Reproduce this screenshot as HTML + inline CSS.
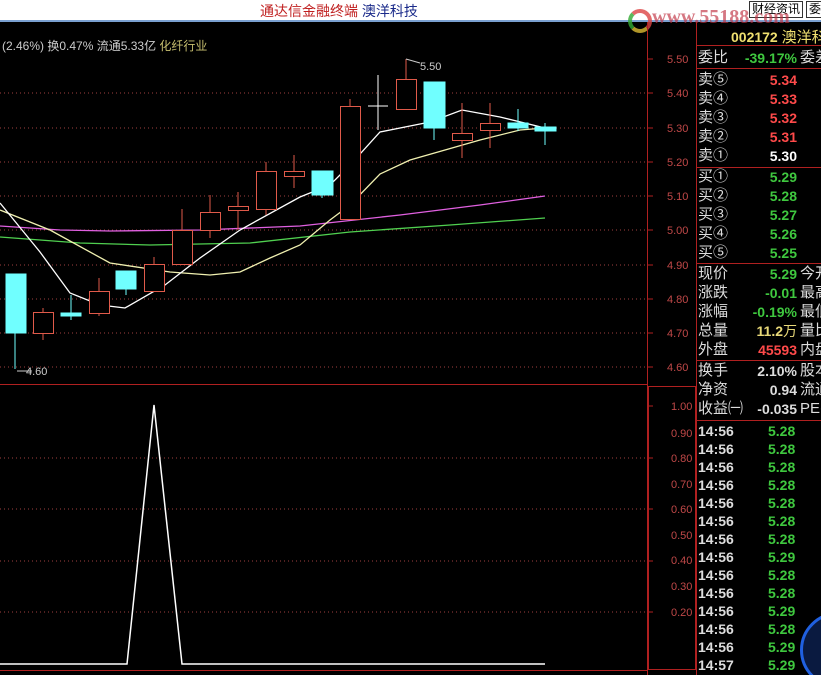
<!DOCTYPE html>
<html style="overflow:hidden;height:675px"><head><meta charset="utf-8"><style>
*{margin:0;padding:0}
body{width:821px;height:675px;overflow:hidden;background:#000;position:relative;font-family:"Liberation Sans","Noto Sans CJK SC",sans-serif}
.top{position:absolute;left:0;top:0;width:821px;height:20px;background:#fff;border-bottom:2px solid #7aa0d0}
.t{position:absolute;white-space:nowrap}
.row{position:absolute;left:698px;height:18px;font-size:15px;line-height:18px;width:123px}
.row .l{position:absolute;left:0;color:#ddd}
.row .v{position:absolute;right:24px;font-weight:bold;font-size:14px}
.g{color:#3fc83f}.r{color:#ff4a4a}.w{color:#fff}.y{color:#e8d878}
</style></head><body>
<div class="top"></div>
<div class="t" style="left:260px;top:1px;font-size:14px;color:#c02020">通达信金融终端 <span style="color:#1a2a8a">澳洋科技</span></div>
<div class="t" style="left:749px;top:1px;font-size:12px;border:1px solid #333;padding:0 2px;line-height:15px;background:#fff">财经资讯</div>
<div class="t" style="left:806px;top:1px;font-size:12px;border:1px solid #333;padding:0 2px;line-height:15px;background:#fff">委</div>
<div class="t" style="left:652px;top:6px;font-size:20px;font-weight:bold;color:#c03040;opacity:.65;font-family:'Liberation Serif',serif">www.55188.com</div>
<div class="t" style="left:628px;top:9px;width:16px;height:16px;border-radius:50%;border:4px solid #d44;border-left-color:#3a3;border-bottom-color:#db3;opacity:.8"></div>
<div class="t" style="left:2px;top:37px;font-size:12px;color:#ccc">(2.46%) 换0.47% 流通5.33亿 <span style="color:#c8c070">化纤行业</span></div>
<svg width="821" height="675" style="position:absolute;left:0;top:0">
<g stroke="#a04040" stroke-dasharray="1 3">
<line x1="0" y1="93" x2="645" y2="93"/><line x1="0" y1="128" x2="645" y2="128"/><line x1="0" y1="162" x2="645" y2="162"/><line x1="0" y1="196" x2="645" y2="196"/><line x1="0" y1="230" x2="645" y2="230"/><line x1="0" y1="265" x2="645" y2="265"/><line x1="0" y1="299" x2="645" y2="299"/><line x1="0" y1="333" x2="645" y2="333"/><line x1="0" y1="367" x2="645" y2="367"/>
<line x1="0" y1="458" x2="645" y2="458"/><line x1="0" y1="509" x2="645" y2="509"/><line x1="0" y1="561" x2="645" y2="561"/><line x1="0" y1="612" x2="645" y2="612"/>
</g>
<g stroke="#b02020" fill="none">
<line x1="0" y1="384.5" x2="647" y2="384.5"/>
<line x1="647.5" y1="22" x2="647.5" y2="675"/>
<line x1="696.5" y1="22" x2="696.5" y2="675"/>
<rect x="648.5" y="386.5" width="47" height="283"/>
<line x1="0" y1="670.5" x2="647" y2="670.5"/>
<line x1="696" y1="45.5" x2="821" y2="45.5"/><line x1="696" y1="68.5" x2="821" y2="68.5"/><line x1="696" y1="167.5" x2="821" y2="167.5"/><line x1="696" y1="263.5" x2="821" y2="263.5"/><line x1="696" y1="360.5" x2="821" y2="360.5"/><line x1="696" y1="420.5" x2="821" y2="420.5"/>
</g>
<g stroke="#b02020">
<line x1="647" y1="59" x2="653" y2="59"/><line x1="647" y1="93" x2="653" y2="93"/><line x1="647" y1="128" x2="653" y2="128"/><line x1="647" y1="162" x2="653" y2="162"/><line x1="647" y1="196" x2="653" y2="196"/><line x1="647" y1="230" x2="653" y2="230"/><line x1="647" y1="265" x2="653" y2="265"/><line x1="647" y1="299" x2="653" y2="299"/><line x1="647" y1="333" x2="653" y2="333"/><line x1="647" y1="367" x2="653" y2="367"/>
<line x1="648" y1="406" x2="653" y2="406"/><line x1="648" y1="458" x2="653" y2="458"/><line x1="648" y1="509" x2="653" y2="509"/><line x1="648" y1="561" x2="653" y2="561"/><line x1="648" y1="612" x2="653" y2="612"/>
</g>
<g fill="#c04848" font-size="11" font-family="Liberation Sans">
<text x="667" y="63">5.50</text><text x="667" y="97">5.40</text><text x="667" y="132">5.30</text><text x="667" y="166">5.20</text><text x="667" y="200">5.10</text><text x="667" y="234">5.00</text><text x="667" y="269">4.90</text><text x="667" y="303">4.80</text><text x="667" y="337">4.70</text><text x="667" y="371">4.60</text>
<text x="671" y="410">1.00</text><text x="671" y="437">0.90</text><text x="671" y="462">0.80</text><text x="671" y="488">0.70</text><text x="671" y="513">0.60</text><text x="671" y="539">0.50</text><text x="671" y="564">0.40</text><text x="671" y="590">0.30</text><text x="671" y="616">0.20</text>
</g>
<polyline fill="none" stroke="#e060e0" stroke-width="1.3" points="0,226 60,230 110,231 200,230 300,226 400,215 480,205 545,196"/>
<polyline fill="none" stroke="#50d050" stroke-width="1.3" points="0,237 80,243 150,245 250,243 350,232 450,225 545,218"/>
<polyline fill="none" stroke="#f0f0b0" stroke-width="1.3" points="0,210 50,230 110,263 170,272 210,275 240,272 270,258 300,245 330,220 350,205 380,174 410,160 445,150 480,140 520,130 545,128"/>
<polyline fill="none" stroke="#fff" stroke-width="1.3" points="0,203 40,252 70,293 100,305 125,308 165,285 200,258 240,230 300,197 330,185 350,165 380,132 410,126 430,122 462,110 500,117 545,128"/>
<g stroke="#e05a4a" fill="#000">
<line x1="43" y1="308" x2="43" y2="340"/><rect x="33.5" y="312.5" width="20" height="21"/>
<line x1="99" y1="278" x2="99" y2="316"/><rect x="89.5" y="291.5" width="20" height="22"/>
<line x1="154" y1="257" x2="154" y2="291"/><rect x="144.5" y="264.5" width="20" height="27"/>
<line x1="182" y1="209" x2="182" y2="264"/><rect x="172.5" y="230.5" width="20" height="34"/>
<line x1="210" y1="195" x2="210" y2="238"/><rect x="200.5" y="212.5" width="20" height="18"/>
<line x1="238" y1="192" x2="238" y2="230"/><rect x="228.5" y="206.5" width="20" height="4"/>
<line x1="266" y1="162" x2="266" y2="215"/><rect x="256.5" y="171.5" width="20" height="38"/>
<line x1="294" y1="155" x2="294" y2="188"/><rect x="284.5" y="171.5" width="20" height="5"/>
<line x1="350" y1="99" x2="350" y2="219"/><rect x="340.5" y="106.5" width="20" height="113"/>
<line x1="406" y1="59" x2="406" y2="79"/><rect x="396.5" y="79.5" width="20" height="30"/>
<line x1="462" y1="103" x2="462" y2="158"/><rect x="452.5" y="133.5" width="20" height="7"/>
<line x1="490" y1="103" x2="490" y2="148"/><rect x="480.5" y="123.5" width="20" height="7"/>
</g>
<g stroke="#70ffff" fill="#70ffff">
<line x1="15" y1="274" x2="15" y2="369"/><rect x="6" y="274" width="20" height="59"/>
<line x1="71" y1="295" x2="71" y2="320"/><rect x="61" y="313" width="20" height="3"/>
<line x1="126" y1="280" x2="126" y2="295"/><rect x="116" y="271" width="20" height="18"/>
<line x1="322" y1="180" x2="322" y2="198"/><rect x="312" y="171" width="21" height="24"/>
<line x1="434" y1="82" x2="434" y2="140"/><rect x="424" y="82" width="21" height="46"/>
<line x1="518" y1="109" x2="518" y2="131"/><rect x="508" y="123" width="20" height="5"/>
<line x1="545" y1="123" x2="545" y2="145"/><rect x="535" y="127" width="21" height="4"/>
</g>
<g stroke="#fff"><line x1="378" y1="75" x2="378" y2="130"/><line x1="368" y1="106" x2="388" y2="106"/></g>
<g stroke="#ccc" fill="none"><polyline points="406,59 420,63"/><polyline points="17,371 32,371"/></g>
<text x="420" y="70" fill="#ccc" font-size="11" font-family="Liberation Sans">5.50</text>
<text x="26" y="375" fill="#ccc" font-size="11" font-family="Liberation Sans">4.60</text>
<polyline fill="none" stroke="#fff" stroke-width="1.5" points="0,664 127,664 154,405 182,664 545,664"/>
</svg>
<div class="t" style="left:731px;top:26px;font-size:14px;font-weight:bold;color:#f0e070">002172 <span style="font-weight:normal;font-size:15px">澳洋科</span></div>
<div class="row" style="top:49px"><span class="l">委比</span><span class="v g">-39.17%</span><span class="t" style="left:102px;color:#ddd">委差</span></div>
<div class="row" style="top:71px"><span class="l">卖⑤</span><span class="v r">5.34</span></div>
<div class="row" style="top:90px"><span class="l">卖④</span><span class="v r">5.33</span></div>
<div class="row" style="top:109px"><span class="l">卖③</span><span class="v r">5.32</span></div>
<div class="row" style="top:128px"><span class="l">卖②</span><span class="v r">5.31</span></div>
<div class="row" style="top:147px"><span class="l">卖①</span><span class="v w">5.30</span></div>
<div class="row" style="top:168px"><span class="l">买①</span><span class="v g">5.29</span></div>
<div class="row" style="top:187px"><span class="l">买②</span><span class="v g">5.28</span></div>
<div class="row" style="top:206px"><span class="l">买③</span><span class="v g">5.27</span></div>
<div class="row" style="top:225px"><span class="l">买④</span><span class="v g">5.26</span></div>
<div class="row" style="top:244px"><span class="l">买⑤</span><span class="v g">5.25</span></div>
<div class="row" style="top:265px"><span class="l">现价</span><span class="v g">5.29</span><span class="t" style="left:102px;color:#ddd">今开</span></div>
<div class="row" style="top:284px"><span class="l">涨跌</span><span class="v g">-0.01</span><span class="t" style="left:102px;color:#ddd">最高</span></div>
<div class="row" style="top:303px"><span class="l">涨幅</span><span class="v g">-0.19%</span><span class="t" style="left:102px;color:#ddd">最低</span></div>
<div class="row" style="top:322px"><span class="l">总量</span><span class="v y">11.2<span style="font-weight:normal">万</span></span><span class="t" style="left:102px;color:#ddd">量比</span></div>
<div class="row" style="top:341px"><span class="l">外盘</span><span class="v r">45593</span><span class="t" style="left:102px;color:#ddd">内盘</span></div>
<div class="row" style="top:362px"><span class="l">换手</span><span class="v" style="color:#ddd">2.10%</span><span class="t" style="left:102px;color:#ddd">股本</span></div>
<div class="row" style="top:381px"><span class="l">净资</span><span class="v" style="color:#ddd">0.94</span><span class="t" style="left:102px;color:#ddd">流通</span></div>
<div class="row" style="top:400px"><span class="l">收益㈠</span><span class="v" style="color:#ddd">-0.035</span><span class="t" style="left:102px;color:#ddd">PE(</span></div>
<div style="position:absolute;left:698px;top:422px;font-size:14px;font-weight:bold;line-height:18px;color:#ddd">
14:56<br>14:56<br>14:56<br>14:56<br>14:56<br>14:56<br>14:56<br>14:56<br>14:56<br>14:56<br>14:56<br>14:56<br>14:56<br>14:57</div>
<div style="position:absolute;left:768px;top:422px;font-size:14px;font-weight:bold;line-height:18px;color:#3fc83f">
5.28<br>5.28<br>5.28<br>5.28<br>5.28<br>5.28<br>5.28<br>5.29<br>5.28<br>5.28<br>5.29<br>5.28<br>5.29<br>5.29</div>
<div style="position:absolute;left:800px;top:612px;width:70px;height:70px;border-radius:50%;border:3px solid #2060e0;background:#0a1a40"></div>
</body></html>
